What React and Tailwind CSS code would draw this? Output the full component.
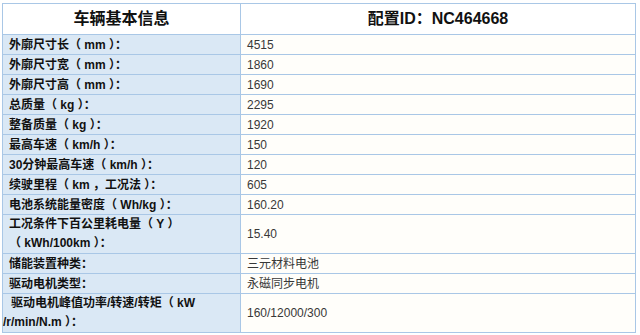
import React from "react";

const rows = [
  ["外廓尺寸长（ mm ）：", "4515"],
  ["外廓尺寸宽（ mm ）：", "1860"],
  ["外廓尺寸高（ mm ）：", "1690"],
  ["总质量（ kg ）：", "2295"],
  ["整备质量（ kg ）：", "1920"],
  ["最高车速（ km/h ）：", "150"],
  ["30分钟最高车速（ km/h ）：", "120"],
  ["续驶里程（ km ，工况法 ）：", "605"],
  ["电池系统能量密度（ Wh/kg ）：", "160.20"],
];

const font = { fontFamily: '"Liberation Sans", "Noto Sans CJK SC", sans-serif' };

export default function App() {
  return (
    <div className="w-[640px] h-[335px] bg-white overflow-hidden pt-[3px] pl-[2px]" style={font}>
      <table className="border-collapse table-fixed w-[633px]">
        <colgroup>
          <col className="w-[238px]" />
          <col className="w-[395px]" />
        </colgroup>
        <tbody>
          <tr className="h-[31px] bg-white">
            <td className="border border-[#a9c7e6] text-center font-bold text-[16px] text-[#111] p-0">车辆基本信息</td>
            <td className="border border-[#a9c7e6] text-center font-bold text-[16px] text-[#111] p-0">配置ID：NC464668</td>
          </tr>
          {rows.map(([k, v]) => (
            <tr key={k} className="h-[20px]">
              <td className="border border-[#a9c7e6] bg-[#dae8f5] font-bold text-[12px] leading-[18px] text-[#111] pl-[6px] py-0 whitespace-nowrap">{k}</td>
              <td className="border border-[#a9c7e6] bg-[#fffefa] text-[12px] leading-[18px] text-[#383838] pl-[6px] py-0">{v}</td>
            </tr>
          ))}
          <tr className="h-[39px]">
            <td className="border border-[#a9c7e6] bg-[#dae8f5] font-bold text-[12px] leading-[19px] text-[#111] pl-[6px] py-0 whitespace-nowrap">
              <div>工况条件下百公里耗电量（ Y ）</div>
              <div>（ kWh/100km ）：</div>
            </td>
            <td className="border border-[#a9c7e6] bg-[#fffefa] text-[12px] leading-[18px] text-[#383838] pl-[6px] py-0">15.40</td>
          </tr>
          <tr className="h-[20px]">
            <td className="border border-[#a9c7e6] bg-[#dae8f5] font-bold text-[12px] leading-[18px] text-[#111] pl-[6px] py-0">储能装置种类：</td>
            <td className="border border-[#a9c7e6] bg-[#fffefa] text-[12px] leading-[18px] text-[#383838] pl-[6px] py-0">三元材料电池</td>
          </tr>
          <tr className="h-[20px]">
            <td className="border border-[#a9c7e6] bg-[#dae8f5] font-bold text-[12px] leading-[18px] text-[#111] pl-[6px] py-0">驱动电机类型：</td>
            <td className="border border-[#a9c7e6] bg-[#fffefa] text-[12px] leading-[18px] text-[#383838] pl-[6px] py-0">永磁同步电机</td>
          </tr>
          <tr className="h-[39px]">
            <td className="border border-[#a9c7e6] bg-[#dae8f5] font-bold text-[12px] leading-[19px] text-[#111] pl-0 py-0 whitespace-nowrap">
              <div className="pl-[8px]">驱动电机峰值功率/转速/转矩（ kW</div>
              <div>/r/min/N.m ）：</div>
            </td>
            <td className="border border-[#a9c7e6] bg-[#fffefa] text-[12px] leading-[18px] text-[#383838] pl-[6px] py-0">160/12000/300</td>
          </tr>
        </tbody>
      </table>
    </div>
  );
}
